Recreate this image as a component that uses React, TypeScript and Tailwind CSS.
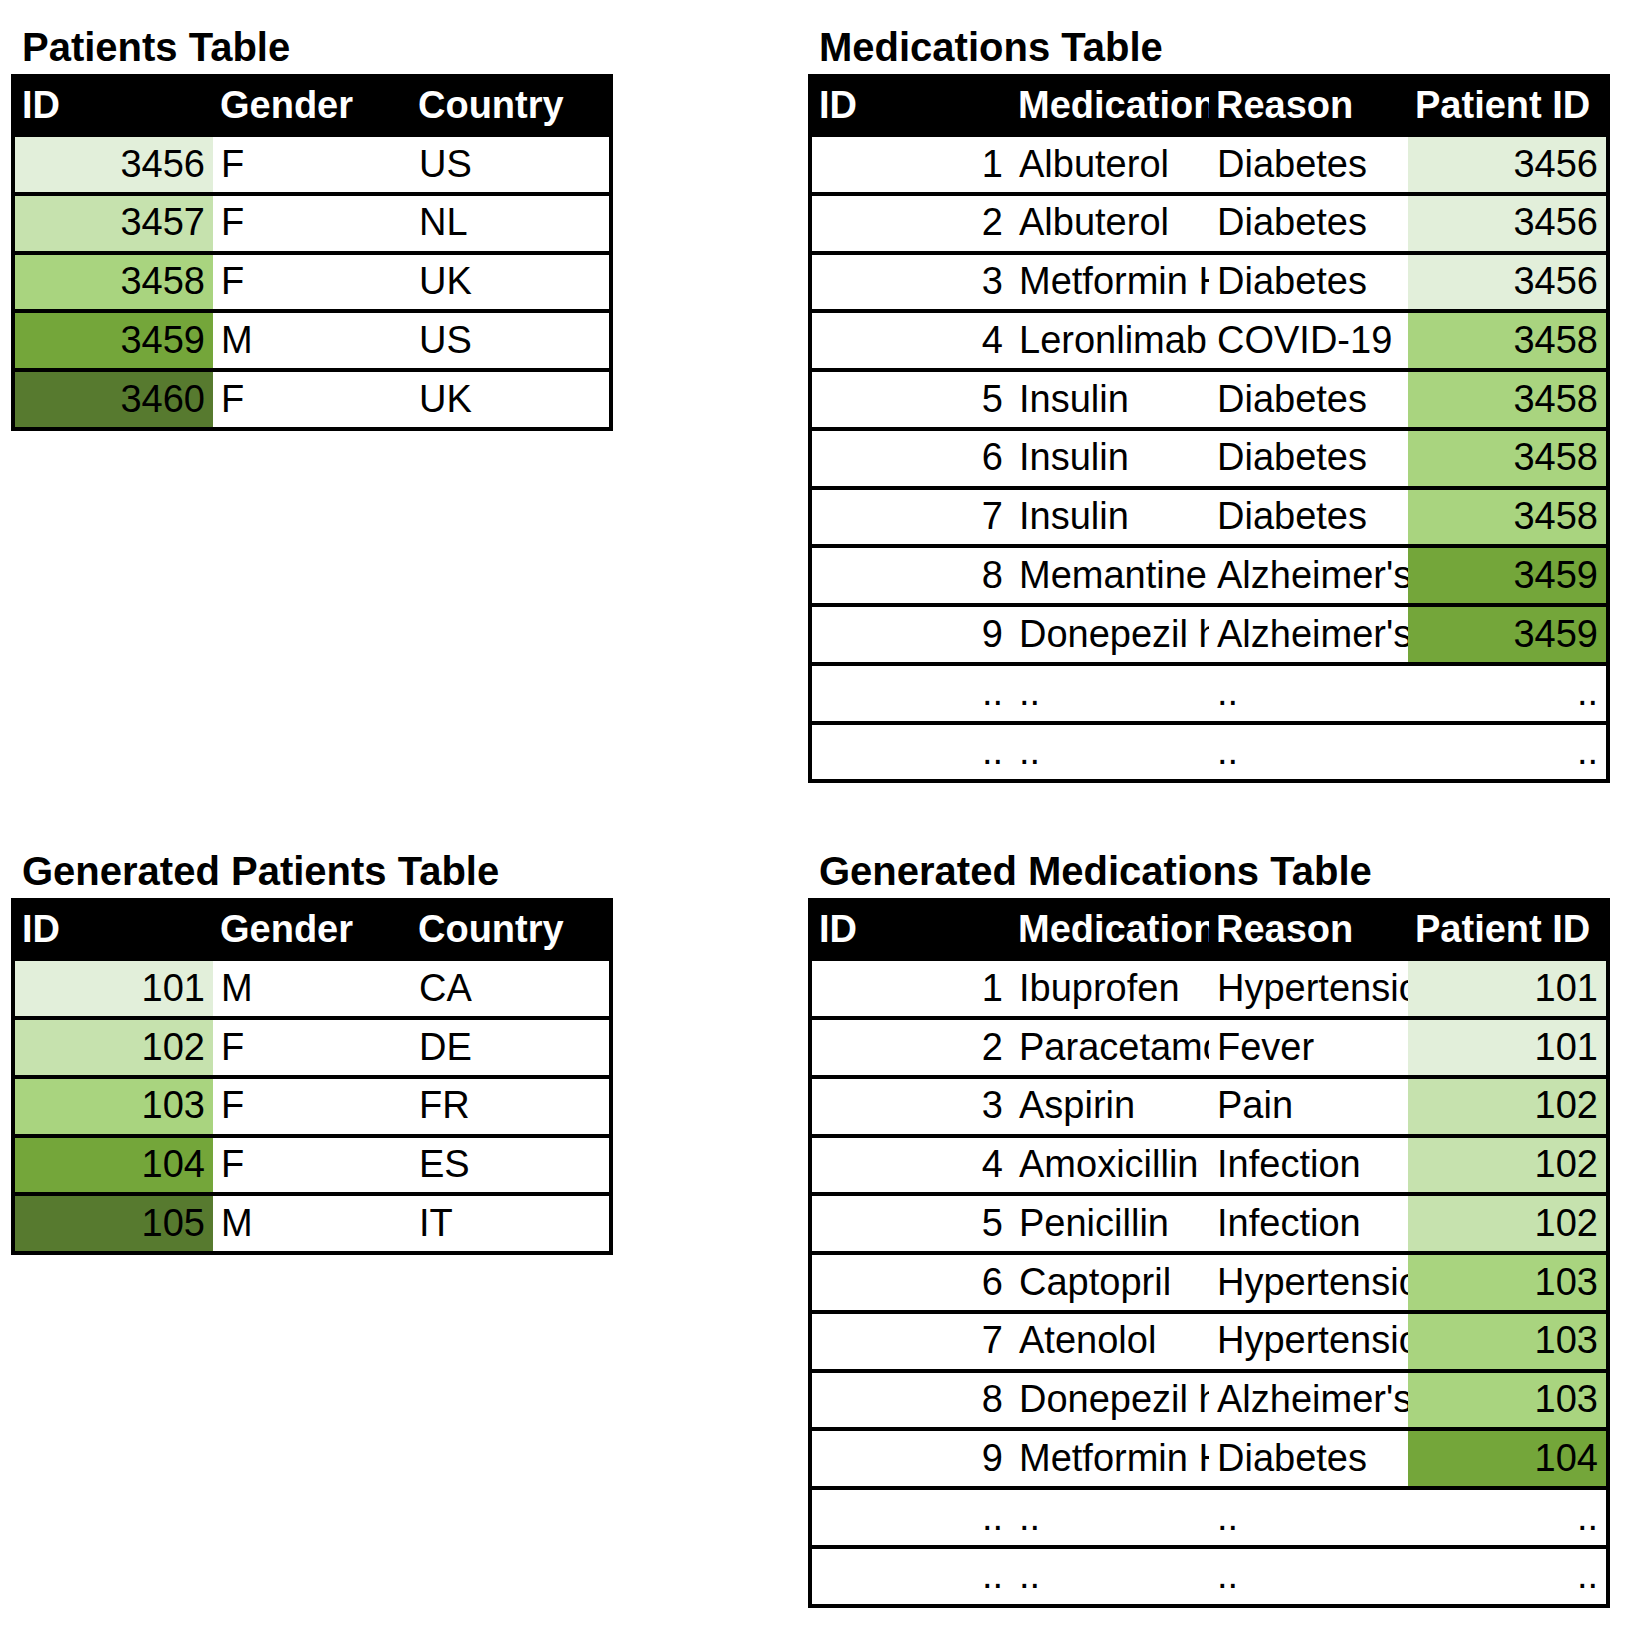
type Row = { cells: string[]; fill?: string };

const G1 = "bg-[#E2EFDA]";
const G2 = "bg-[#C6E2AE]";
const G3 = "bg-[#A9D47F]";
const G4 = "bg-[#74A63A]";
const G5 = "bg-[#577A2F]";

const patients: Row[] = [
  { cells: ["3456", "F", "US"], fill: G1 },
  { cells: ["3457", "F", "NL"], fill: G2 },
  { cells: ["3458", "F", "UK"], fill: G3 },
  { cells: ["3459", "M", "US"], fill: G4 },
  { cells: ["3460", "F", "UK"], fill: G5 },
];

const genPatients: Row[] = [
  { cells: ["101", "M", "CA"], fill: G1 },
  { cells: ["102", "F", "DE"], fill: G2 },
  { cells: ["103", "F", "FR"], fill: G3 },
  { cells: ["104", "F", "ES"], fill: G4 },
  { cells: ["105", "M", "IT"], fill: G5 },
];

const dots: Row = { cells: ["..", "..", "..", ".."] };

const medications: Row[] = [
  { cells: ["1", "Albuterol", "Diabetes", "3456"], fill: G1 },
  { cells: ["2", "Albuterol", "Diabetes", "3456"], fill: G1 },
  { cells: ["3", "Metformin Hydrochloride", "Diabetes", "3456"], fill: G1 },
  { cells: ["4", "Leronlimab", "COVID-19", "3458"], fill: G3 },
  { cells: ["5", "Insulin", "Diabetes", "3458"], fill: G3 },
  { cells: ["6", "Insulin", "Diabetes", "3458"], fill: G3 },
  { cells: ["7", "Insulin", "Diabetes", "3458"], fill: G3 },
  { cells: ["8", "Memantine", "Alzheimer's disease", "3459"], fill: G4 },
  { cells: ["9", "Donepezil hydrochloride", "Alzheimer's disease", "3459"], fill: G4 },
  dots,
  dots,
];

const genMedications: Row[] = [
  { cells: ["1", "Ibuprofen", "Hypertension", "101"], fill: G1 },
  { cells: ["2", "Paracetamol", "Fever", "101"], fill: G1 },
  { cells: ["3", "Aspirin", "Pain", "102"], fill: G2 },
  { cells: ["4", "Amoxicillin", "Infection", "102"], fill: G2 },
  { cells: ["5", "Penicillin", "Infection", "102"], fill: G2 },
  { cells: ["6", "Captopril", "Hypertension", "103"], fill: G3 },
  { cells: ["7", "Atenolol", "Hypertension", "103"], fill: G3 },
  { cells: ["8", "Donepezil hydrochloride", "Alzheimer's disease", "103"], fill: G3 },
  { cells: ["9", "Metformin Hydrochloride", "Diabetes", "104"], fill: G4 },
  dots,
  dots,
];

type Col = { label: string; width: string; right?: boolean };

const patientCols: Col[] = [
  { label: "ID", width: "w-[198px]", right: true },
  { label: "Gender", width: "w-[198px]" },
  { label: "Country", width: "w-[198px]" },
];

const medCols: Col[] = [
  { label: "ID", width: "w-[199px]", right: true },
  { label: "Medication", width: "w-[198px]" },
  { label: "Reason", width: "w-[199px]" },
  { label: "Patient ID", width: "w-[198px]", right: true },
];

function DataTable({
  title,
  cols,
  rows,
  fillCol,
}: {
  title: string;
  cols: Col[];
  rows: Row[];
  fillCol: number;
}) {
  return (
    <div className="flex flex-col">
      {/* 表タイトル */}
      <div className="pt-[27px] pb-[7px] pl-[11px] text-[40px] leading-[40px] font-bold text-black whitespace-nowrap">
        {title}
      </div>
      <div className="flex flex-col border-x-4 border-black">
        <div className="flex h-[63px] items-center bg-black">
          {cols.map((c, i) => (
            <div
              key={i}
              className={`${c.width} shrink-0 overflow-hidden whitespace-nowrap px-[7px] text-[38px] leading-[1.25] font-bold text-white`}
            >
              {c.label}
            </div>
          ))}
        </div>
        {rows.map((r, ri) => (
          <div key={ri} className="flex h-[58.75px] border-b-4 border-black">
            {r.cells.map((cell, ci) => (
              <div
                key={ci}
                className={`${cols[ci].width} ${ci === fillCol && r.fill ? r.fill : "bg-white"} ${
                  cols[ci].right ? "justify-end" : "justify-start"
                } flex shrink-0 items-center overflow-hidden whitespace-nowrap px-[8px] text-[38px] leading-[1.25] text-black`}
              >
                {cell}
              </div>
            ))}
          </div>
        ))}
      </div>
    </div>
  );
}

export default function App() {
  return (
    <div
      className="w-[1640px] h-[1625px] bg-white pl-[11px]"
      style={{ fontFamily: '"Liberation Sans", Arial, sans-serif' }}
    >
      <div className="grid grid-cols-[602px_802px] gap-x-[195px] gap-y-[41px] items-start">
        <DataTable title="Patients Table" cols={patientCols} rows={patients} fillCol={0} />
        <DataTable title="Medications Table" cols={medCols} rows={medications} fillCol={3} />
        <DataTable title="Generated Patients Table" cols={patientCols} rows={genPatients} fillCol={0} />
        <DataTable title="Generated Medications Table" cols={medCols} rows={genMedications} fillCol={3} />
      </div>
    </div>
  );
}
